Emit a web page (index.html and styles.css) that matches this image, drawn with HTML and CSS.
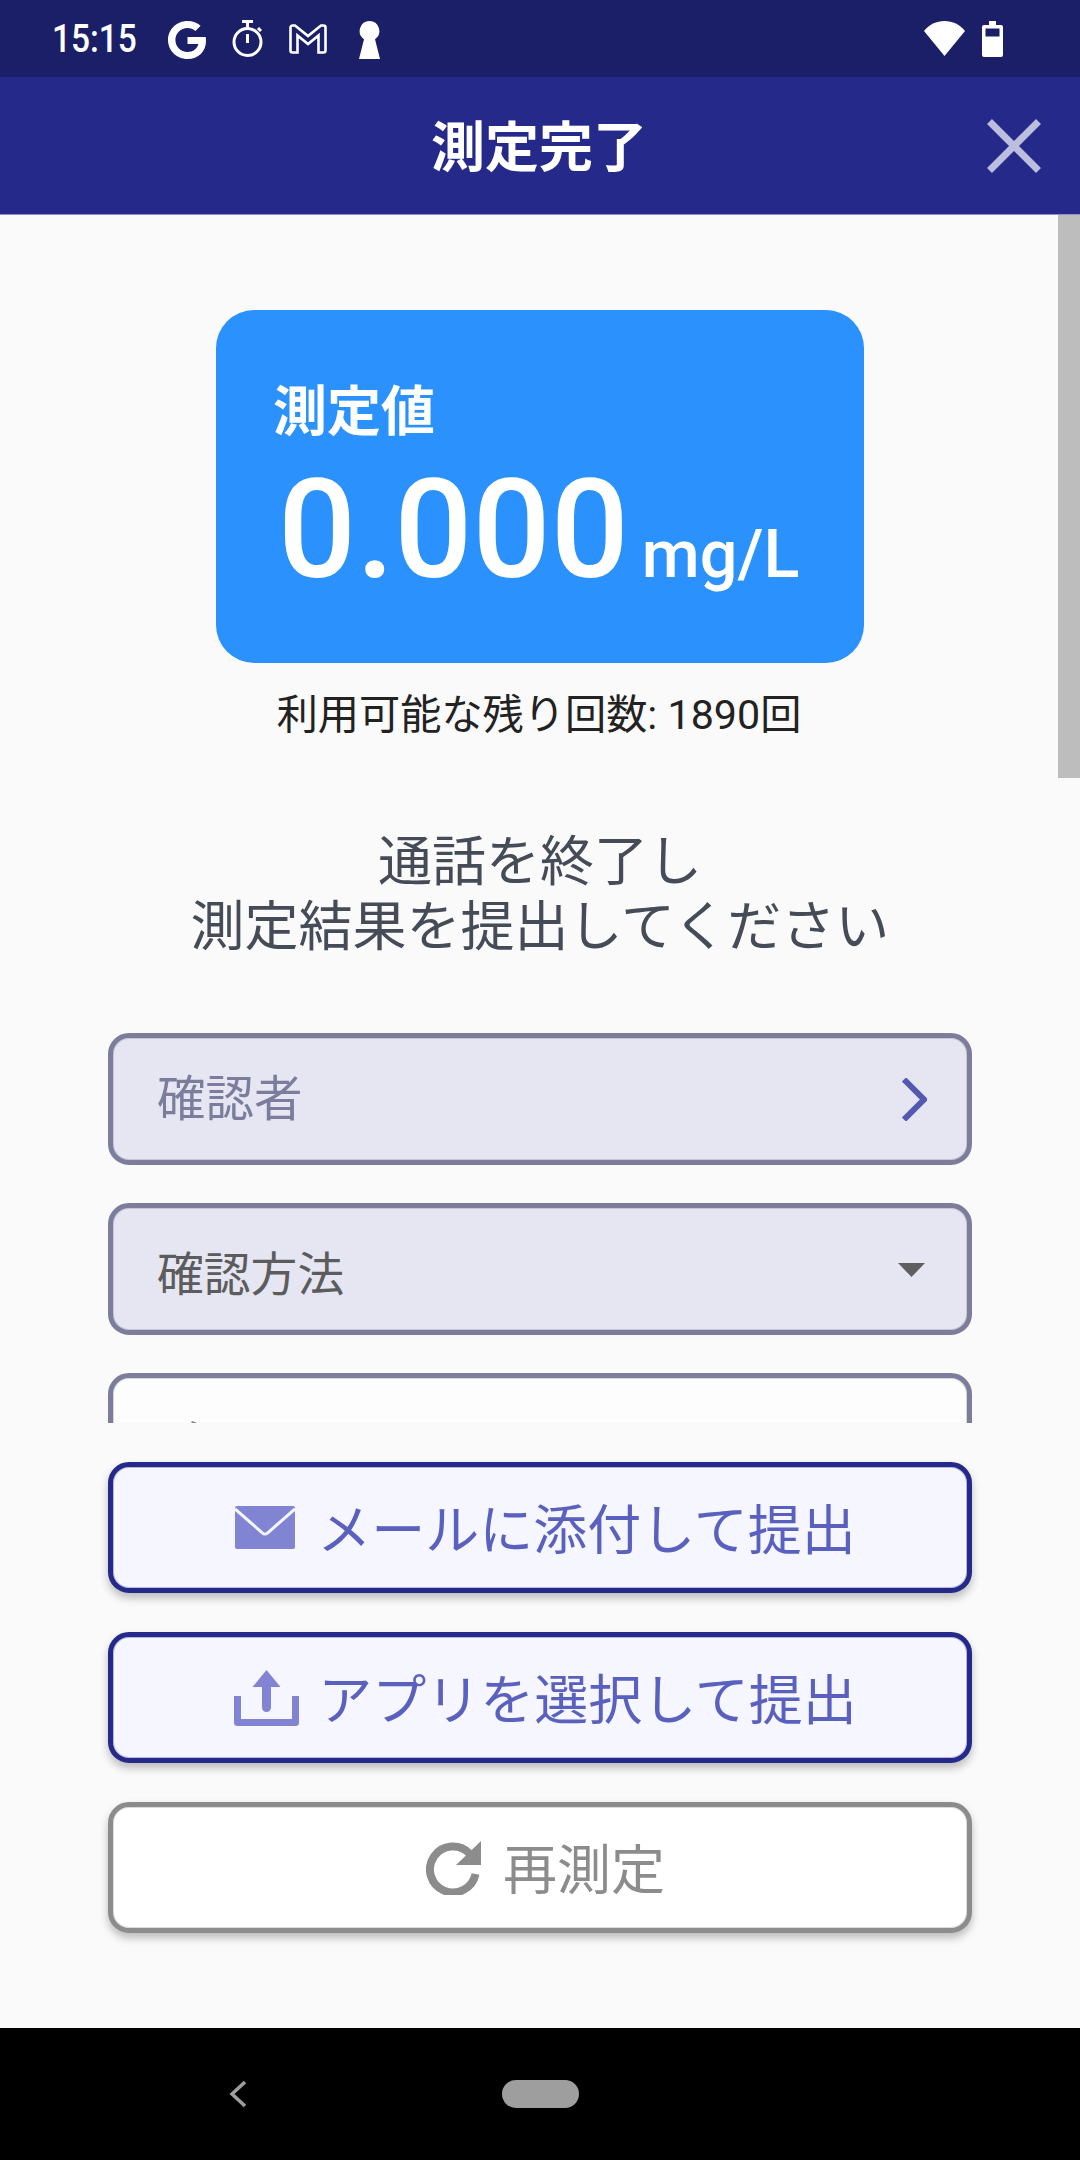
FILE: index.html
```html
<!DOCTYPE html>
<html lang="ja">
<head>
<meta charset="utf-8">
<title>測定完了</title>
<link rel="stylesheet" href="styles.css">
</head>
<body>
<div class="phone">
  <header class="status">
    <div class="status-left">
      <span class="clock">15:15</span>
      <svg class="ic ic-g" viewBox="0 0 38 38"><path d="M19.500 0C8.700 0 0 8.500 0 19s8.700 19 19.500 19C30.400 38 38 30.500 38 19.700c0-1.300-.1-2.500-.4-3.700H19.500v7h10.800c-1 4.600-5.200 8-10.800 8C12.800 31 7.400 25.700 7.400 19S12.800 7 19.500 7c3.200 0 5.900 1.200 7.900 3l5.200-5.200C29.200 1.800 24.800 0 19.500 0z" fill="#fff"/></svg>
      <svg class="ic ic-t" viewBox="0 0 32 38"><path d="M10 1.500h11M15.500 1.500v7" stroke="#fff" stroke-width="3" fill="none"/><circle cx="15.500" cy="22" r="13.500" stroke="#fff" stroke-width="3" fill="none"/><path d="M15.500 14v9" stroke="#fff" stroke-width="3"/><path d="M26 8l3 3" stroke="#fff" stroke-width="3"/></svg>
      <svg class="ic ic-m" viewBox="0 0 38 30"><path d="M3.500 1.500h2.500L19 12 32 1.500h2.500a2 2 0 0 1 2 2v23a2 2 0 0 1-2 2H29.500V11.500L19 20 8.500 11.500v17H3.500a2 2 0 0 1-2-2v-23a2 2 0 0 1 2-2z" stroke="#fff" stroke-width="2.600" fill="none"/></svg>
      <svg class="ic ic-k" viewBox="0 0 21 38"><path d="M10.500 0a10 10 0 0 1 5.500 18.200L21 38H0l5-19.800A10 10 0 0 1 10.500 0z" fill="#fff"/></svg>
    </div>
    <div class="status-right">
      <svg class="ic ic-w" viewBox="0 0 41 35"><path d="M0 10C5 3.500 12.500 0 20.500 0S36 3.500 41 10L20.500 35z" fill="#fff"/></svg>
      <svg class="ic ic-b" viewBox="0 0 21 36"><path fill-rule="evenodd" d="M7 0h7v4h5a2 2 0 0 1 2 2v28a2 2 0 0 1-2 2H2a2 2 0 0 1-2-2V6a2 2 0 0 1 2-2h5zM3.500 7.500v8h14v-8z" fill="#fff"/></svg>
    </div>
  </header>
  <div class="appbar">
    <h1 class="title">測定完了</h1>
    <svg class="close" viewBox="0 0 54 54"><path d="M2.500 2.500l49 49M51.500 2.500l-49 49" stroke="#bcbedd" stroke-width="7" fill="none"/></svg>
  </div>
  <main class="content">
    <div class="scrollbar"></div>
    <section class="scroll">
      <div class="card">
        <div class="card-label">測定値</div>
        <div class="card-value"><span class="num">0.000</span><span class="unit">mg/L</span></div>
      </div>
      <p class="remain">利用可能な残り回数: 1890回</p>
      <p class="message">通話を終了し<br>測定結果を提出してください</p>
      <div class="fields">
        <div class="field field-filled">
          <span class="hint">確認者</span>
          <svg class="chev" viewBox="0 0 26 43"><path d="M3 1.500L23 21.500 3 41.500" stroke="#5558b0" stroke-width="6" fill="none"/></svg>
        </div>
        <div class="field field-filled">
          <span class="value">確認方法</span>
          <svg class="caret" viewBox="0 0 27 14"><path d="M0 0h27L13.500 14z" fill="#5f5f5f"/></svg>
        </div>
        <div class="field field-plain">
          <span class="hint hint-low">メモ</span>
        </div>
      </div>
    </section>
    <section class="actions">
      <button class="btn btn-primary">
        <svg class="btn-ic" viewBox="0 0 60 43"><rect width="60" height="43" rx="2" fill="#8084d3"/><path d="M0 3l27.500 24a3.500 3.500 0 0 0 5 0L60 3" stroke="#f5f6ff" stroke-width="3" fill="none"/></svg>
        <span class="btn-label">メールに添付して提出</span>
      </button>
      <button class="btn btn-primary btn-app">
        <svg class="btn-ic btn-ic-up" viewBox="0 0 65 56"><path d="M32.500 0L46.500 17H37v20.500a4.500 4.500 0 0 1-9 0V17H18.500z" fill="#8084d3"/><path d="M3.500 26v26.500h58V26" stroke="#8084d3" stroke-width="7" stroke-linejoin="round" fill="none"/></svg>
        <span class="btn-label">アプリを選択して提出</span>
      </button>
      <button class="btn btn-grey">
        <svg class="btn-ic btn-ic-re" viewBox="0 0 55 55"><path d="M43.500 13.500A23 23 0 1 0 49.500 34" stroke="#8c8c8c" stroke-width="8" fill="none"/><path d="M55 1v24H30z" fill="#8c8c8c"/></svg>
        <span class="btn-label">再測定</span>
      </button>
    </section>
  </main>
  <footer class="nav">
    <svg class="nav-back" viewBox="0 0 20 28"><path d="M17 2L4 14l13 12" stroke="#9e9e9e" stroke-width="3.500" fill="none"/></svg>
    <div class="nav-home"></div>
  </footer>
</div>
</body>
</html>
```

FILE: styles.css
```css
* { box-sizing: border-box; }
html, body { margin: 0; padding: 0; }
body {
  width: 1080px;
  height: 2160px;
  overflow: hidden;
  background: #fafafa;
  font-family: Roboto, "Noto Sans CJK JP", sans-serif;
}
.phone { display: flex; flex-direction: column; height: 2160px; }

.status {
  height: 77px;
  flex: none;
  background: #1b1f68;
  display: flex;
  justify-content: space-between;
  padding: 20px 77px 0 52px;
}
.status-left { display: flex; align-items: flex-start; }
.status-right { display: flex; align-items: flex-start; }
.clock {
  display: block;
  color: #fff;
  font-size: 38px;
  font-weight: 500;
  line-height: 38px;
  width: 116px;
  transform: scaleX(.88);
  transform-origin: left center;
}
.ic { display: block; flex: none; }
.ic-g { width: 38px; height: 38px; margin-top: 1px; }
.ic-t { width: 32px; height: 38px; margin-left: 26px; }
.ic-m { width: 38px; height: 30px; margin: 4px 0 0 25px; }
.ic-k { width: 21px; height: 38px; margin: 1px 0 0 32px; }
.ic-w { width: 41px; height: 35px; margin-top: 1px; }
.ic-b { width: 21px; height: 36px; margin: 1px 0 0 17px; }

.appbar {
  height: 138px;
  flex: none;
  background: #252a8a;
  border-bottom: 1px solid #8e91cb;
  display: flex;
  align-items: center;
  justify-content: center;
  position: relative;
}
.title { margin: 6px 2px 0 0; color: #fff; font-size: 54px; font-weight: 700; line-height: 72px; }
.close { position: absolute; right: 39px; top: 42px; width: 54px; height: 54px; }

.content {
  flex: 1;
  display: flex;
  flex-direction: column;
  position: relative;
  min-height: 0;
}
.scrollbar {
  position: absolute;
  right: 0;
  top: 0;
  width: 22px;
  height: 563px;
  background: #bdbdbd;
}
.scroll {
  height: 1208px;
  flex: none;
  overflow: hidden;
  display: flex;
  flex-direction: column;
  align-items: center;
  padding-top: 95px;
}
.card {
  width: 648px;
  height: 353px;
  flex: none;
  background: #2b91fd;
  border-radius: 38px;
  padding: 71px 0 0 58px;
  color: #fff;
}
.card-label { font-size: 54px; font-weight: 700; line-height: 64px; margin-left: -1px; }
.card-value { display: flex; align-items: baseline; line-height: 170px; margin-top: 0; }
.num { font-size: 137.5px; font-weight: 500; margin-left: 4px; }
.unit { font-size: 66.5px; font-weight: 500; margin-left: 13px; }
.remain {
  flex: none;
  margin: 24px 2px 0 0;
  font-size: 41.2px;
  line-height: 56px;
  color: #222;
}
.message {
  flex: none;
  margin: 87px 0 0;
  font-size: 54px;
  line-height: 65px;
  text-align: center;
  color: #454c58;
}
.fields {
  width: 864px;
  flex: none;
  margin-top: 73px;
  display: flex;
  flex-direction: column;
  gap: 38px;
}
.field {
  height: 132px;
  flex: none;
  border: 5px solid #7b7d9b;
  border-radius: 21px;
  display: flex;
  align-items: center;
  justify-content: space-between;
  padding: 0 40px 0 44px;
  font-size: 46.8px;
  box-shadow: inset 0 0 0 1px rgba(123,125,155,.3);
}
.field-filled { background: #e5e6f2; }
.field-plain { background: #fdfdfd; }
.hint { color: #7a7d9c; margin-top: -8px; font-size: 48.5px; }
.hint-low { margin-top: -5px; }
.value { color: #5c5c5c; margin-top: 2px; }
.chev { width: 26px; height: 43px; }
.caret { width: 27px; height: 14px; margin: 2px 2px 0 0; }

.actions {
  padding-top: 39px;
  display: flex;
  flex-direction: column;
  align-items: center;
  gap: 39px;
}
.btn {
  width: 864px;
  height: 131px;
  flex: none;
  border-radius: 21px;
  display: flex;
  align-items: center;
  justify-content: center;
  gap: 22px;
  font-family: inherit;
  font-size: 54px;
  padding: 0 0 0 11px;
}
.btn-label { margin-top: -3px; }
.btn-app { gap: 19px; }
.btn-primary {
  background: #f5f6ff;
  border: 5px solid #252a8a;
  color: #5a60bd;
  box-shadow: 0 5px 8px rgba(0,0,0,.25), inset 0 0 0 1px rgba(37,42,138,.3);
}
.btn-grey {
  background: #fff;
  border: 5px solid #8c8c8c;
  color: #8c8c8c;
  box-shadow: 0 5px 8px rgba(0,0,0,.25), inset 0 0 0 1px rgba(140,140,140,.3);
}
.btn-ic { width: 60px; height: 43px; flex: none; }
.btn-ic-up { width: 65px; height: 56px; }
.btn-ic-re { width: 55px; height: 55px; }

.nav {
  height: 132px;
  flex: none;
  background: #000;
  position: relative;
  display: flex;
  align-items: center;
  padding-left: 228px;
}
.nav-back { width: 20px; height: 28px; flex: none; }
.nav-home {
  width: 77px;
  height: 28px;
  border-radius: 14px;
  background: #9e9e9e;
  margin-left: 254px;
}
```
